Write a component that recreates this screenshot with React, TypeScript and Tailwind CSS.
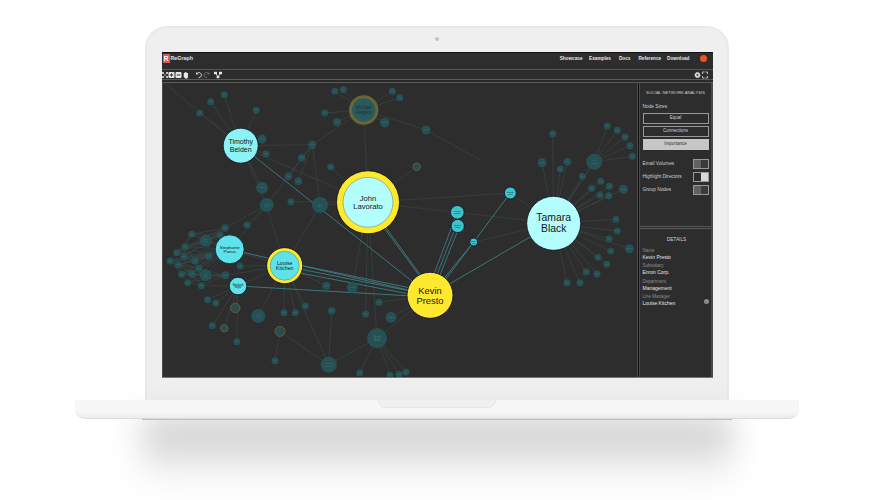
import { ReactNode } from 'react';

const hubs = {
  timothy: [240.7, 145.7],
  michael: [363.7, 110],
  john: [368, 202.3],
  stephanie: [229.7, 249.3],
  louise: [284.7, 265.7],
  elizabeth: [238, 286],
  kevin: [430, 295.3],
  tamara: [553.7, 223.3],
  tiny: [473.7, 242],
  greg: [510.3, 193],
  scott: [377, 338.3],
  amy: [594.3, 161.7],
  chris: [328.7, 364.7],
  bill: [320, 205],
  sam: [266.7, 205],
  mid: [312.3, 144.7],
  olive: [280, 331.3],
} as const;

type Hub = keyof typeof hubs;
type Dim = [number, number, number, Hub, (string | null)?];

// faded nodes in page coordinates: x, y, r, the hub they hang off, optional label
const dimNodes: Dim[] = [
  [224.3, 94.7, 3.5, 'timothy'], [210.7, 101.7, 3.5, 'timothy'], [199.7, 113, 3.5, 'timothy'],
  [256.3, 110.3, 3.5, 'timothy'], [262, 139, 4.5, 'timothy'], [266, 153.7, 3.5, 'timothy'],
  [312.3, 144.7, 4.2, 'michael'], [301.7, 157.7, 3.8, 'mid'], [288.3, 176.3, 3.8, 'mid'],
  [298.3, 181.3, 3.8, 'mid'], [330.7, 167, 3.5, 'john'], [262, 187.7, 6, 'timothy'],
  [324.7, 113, 3.5, 'michael'], [337, 122, 4, 'michael'], [334.7, 91.3, 3.5, 'michael'],
  [343.3, 89.7, 3.5, 'michael'], [392.3, 91.3, 3.5, 'michael'], [399.7, 97.7, 3.5, 'michael'],
  [384.7, 122.7, 4.8, 'michael'], [426, 130, 4.5, 'michael'],
  [552.7, 133.7, 3.5, 'tamara'], [542, 162.7, 4.5, 'tamara'], [567.3, 161.7, 3.8, 'tamara'],
  [560.3, 169, 3.5, 'tamara'], [594.3, 161.7, 8, 'tamara', 'Amy Wong'], [582.3, 176.3, 3.5, 'tamara'],
  [591.7, 188.3, 3.5, 'tamara'], [600.7, 181.3, 3.5, 'tamara'], [609.3, 186.3, 3.5, 'tamara'],
  [623.3, 189.3, 4.5, 'tamara'], [600, 195, 3.5, 'tamara'], [608.7, 195.7, 3.5, 'tamara'],
  [607.3, 126, 3.5, 'amy'], [617.3, 130.3, 3.5, 'amy'], [625, 137, 3.5, 'amy'],
  [630, 145.7, 3.5, 'amy'], [632.3, 156.3, 3.5, 'amy'],
  [616, 219.3, 3.5, 'tamara'], [617.3, 231, 3.5, 'tamara'], [609, 239, 3.5, 'tamara'],
  [610.7, 251, 3.5, 'tamara'], [629.3, 248.7, 4.5, 'tamara'], [598, 257.3, 3.5, 'tamara'],
  [606.7, 264.3, 3.5, 'tamara'], [597, 274, 3.5, 'tamara'], [586.3, 272, 3.5, 'tamara'],
  [580, 282.7, 3.5, 'tamara'], [567, 282.7, 3.5, 'tamara'],
  [266.7, 205, 7, 'timothy', 'Sam Ross'], [291, 201.7, 3.5, 'john'], [320, 205, 8, 'john', 'Bill Rapp'],
  [225, 228, 3.8, 'sam'], [247, 225, 3.5, 'sam'], [191.7, 234.3, 3.5, 'stephanie'],
  [205.7, 240.7, 6, 'stephanie', 'Dan Hyatt'], [220, 235, 3.5, 'stephanie'], [185, 246.7, 3.5, 'stephanie'],
  [176.7, 252.7, 3.5, 'stephanie'], [184, 256.7, 3.5, 'stephanie'], [195, 260.7, 3.8, 'stephanie'],
  [208.7, 256, 4, 'stephanie'], [170, 261, 3.5, 'stephanie'], [178.3, 264.7, 3.5, 'stephanie'],
  [199, 268.3, 3.5, 'stephanie'], [240, 266, 3.5, 'louise'], [181.7, 274.3, 3.5, 'stephanie'],
  [192, 274, 3.8, 'stephanie'], [205.7, 275.3, 6, 'stephanie', 'Ted Barr'], [225.3, 275.3, 4, 'louise'],
  [187.7, 282.7, 3.5, 'stephanie'], [201.3, 285.7, 3.5, 'elizabeth'], [207.7, 299.7, 3.5, 'elizabeth'],
  [215.7, 303, 3.5, 'elizabeth'], [258.3, 316, 7, 'louise', 'Lynn Hart'], [236.7, 341.7, 3.5, 'elizabeth'],
  [284, 312.7, 3.5, 'louise'], [295.3, 312.7, 3.5, 'louise'], [305.3, 306, 3.5, 'louise'],
  [326.3, 285.7, 4, 'louise'], [352.3, 287.3, 5.5, 'john'], [331.7, 310.7, 3.8, 'chris'],
  [365.7, 314, 3.5, 'john'], [379, 302.3, 3.5, 'kevin'], [391, 317.3, 5.5, 'kevin'],
  [377, 338.3, 10, 'john', 'Scott Neal'], [328.7, 364.7, 8, 'scott', 'Chris Dorland'],
  [359.7, 373, 3.5, 'scott'], [390, 375, 3.5, 'scott'], [399, 374.3, 3.5, 'scott'],
  [406, 372.3, 3.5, 'scott'], [275, 360.7, 3.5, 'olive'], [212.3, 325.7, 3.5, 'elizabeth'],
];

// olive ringed ones are directors that are faded out
const ringed: [number, number, number, Hub][] = [
  [416.7, 166.7, 4.2, 'john'],
  [235.3, 308, 5.2, 'elizabeth'],
  [224.3, 328.3, 4.2, 'elizabeth'],
  [280, 331.3, 5.5, 'chris'],
];

const extraEdges: [Hub, Hub][] = [
  ['timothy', 'john'], ['timothy', 'mid'], ['michael', 'john'], ['john', 'tamara'],
  ['john', 'greg'], ['sam', 'mid'], ['bill', 'mid'], ['sam', 'louise'], ['bill', 'louise'],
  ['tamara', 'greg'], ['tamara', 'amy'], ['tiny', 'tamara'], ['chris', 'louise'],
  ['scott', 'kevin'], ['sam', 'stephanie'], ['stephanie', 'louise'], ['elizabeth', 'louise'],
];

const strongEdges: [number, number, number, number][] = [
  [240.7, 145.7, 430, 295.3],
  [365, 202, 430, 290], [370, 206, 433, 292],
  [229.7, 249.3, 430, 295],
  [284.7, 262, 430, 292], [284.7, 266, 430, 295], [284.7, 270, 430, 298],
  [238, 286, 430, 297],
  [457.3, 212.3, 426, 295], [456, 226, 429, 295], [459.5, 226, 432, 295],
  [473.7, 242, 430, 295.3], [473, 243, 433, 296],
  [473.7, 242, 510.3, 193],
  [553.7, 223.3, 430, 295.3],
];

const clusterIdx = dimNodes
  .map((n, i) => (n[0] < 230 && n[1] > 225 && n[1] < 295 ? i : -1))
  .filter(i => i >= 0);

type BigNode = {
  x: number;
  y: number;
  r: number;
  fill: string;
  ring?: number;
  size: number;
  lines: string[];
};

const bigNodes: BigNode[] = [
  { x: 240.7, y: 145.7, r: 17.5, fill: '#8af3f6', size: 7, lines: ['Timothy', 'Belden'] },
  { x: 368, y: 202.3, r: 31.5, ring: 25, fill: '#b3fdfd', size: 7.6, lines: ['John', 'Lavorato'] },
  { x: 229.7, y: 249.3, r: 14.5, fill: '#5fe3ea', size: 4.4, lines: ['Stephanie', 'Panus'] },
  { x: 284.7, y: 265.7, r: 18, ring: 14.5, fill: '#5fe3ea', size: 5.3, lines: ['Louise', 'Kitchen'] },
  { x: 238, y: 286, r: 8.8, fill: '#5fe3ea', size: 2.6, lines: ['Elizabeth', 'Sager'] },
  { x: 553.7, y: 223.3, r: 27, fill: '#b3fdfd', size: 10.4, lines: ['Tamara', 'Black'] },
  { x: 430, y: 295.3, r: 23, fill: '#ffe92e', size: 9.4, lines: ['Kevin', 'Presto'] },
  { x: 457.3, y: 212.3, r: 6.8, fill: '#3cc3cb', size: 2.2, lines: ['Megan', 'Parker'] },
  { x: 457.7, y: 226, r: 6.6, fill: '#3cc3cb', size: 2.2, lines: ['Stacey', 'White'] },
  { x: 473.7, y: 242, r: 4, fill: '#3cc3cb', size: 1.8, lines: ['Sean', 'Cox'] },
  { x: 510.3, y: 193, r: 6, fill: '#3cc3cb', size: 2.2, lines: ['Gregg', 'Bell'] },
];

function Label({ x, y, size, lines, fill }: { x: number; y: number; size: number; lines: string[]; fill: string }) {
  const lh = size * 1.06;
  return (
    <text x={x} textAnchor="middle" fontSize={size} fill={fill} fontFamily="Liberation Sans, sans-serif">
      {lines.map((l, i) => (
        <tspan key={l} x={x} y={y + (i - (lines.length - 1) / 2) * lh + size * 0.35}>
          {l}
        </tspan>
      ))}
    </text>
  );
}

function Graph() {
  return (
    <svg viewBox="163 83 474 295" className="block w-[474px] h-[295px]">
      <g stroke="#3a4c4b" strokeWidth="0.55">
        {dimNodes.map((n, i) => (
          <line key={i} x1={n[0]} y1={n[1]} x2={hubs[n[3]][0]} y2={hubs[n[3]][1]} />
        ))}
        {ringed.map((n, i) => (
          <line key={i} x1={n[0]} y1={n[1]} x2={hubs[n[3]][0]} y2={hubs[n[3]][1]} />
        ))}
        {extraEdges.map(([a, b], i) => (
          <line key={i} x1={hubs[a][0]} y1={hubs[a][1]} x2={hubs[b][0]} y2={hubs[b][1]} />
        ))}
        <line x1="164" y1="83" x2="240" y2="145" />
        <line x1="426" y1="130" x2="480" y2="160" />
        {clusterIdx.map((a, i) =>
          clusterIdx.slice(i + 1, i + 5).map(b => (
            <line key={`${a}-${b}`} x1={dimNodes[a][0]} y1={dimNodes[a][1]} x2={dimNodes[b][0]} y2={dimNodes[b][1]} />
          )),
        )}
      </g>
      <g stroke="#3d7f83" strokeWidth="0.9">
        {strongEdges.map(([x1, y1, x2, y2], i) => (
          <line key={i} x1={x1} y1={y1} x2={x2} y2={y2} />
        ))}
      </g>
      {dimNodes.map((n, i) => (
        <g key={i}>
          <circle cx={n[0]} cy={n[1]} r={n[2]} fill="#255155" />
          {n[4] ? (
            <Label x={n[0]} y={n[1]} size={n[2] / 3.2} lines={n[4].split(' ')} fill="#4f7679" />
          ) : (
            <rect x={n[0] - n[2] * 0.5} y={n[1] - 0.4} width={n[2]} height="0.8" fill="#37666a" />
          )}
        </g>
      ))}
      {ringed.map((n, i) => (
        <circle key={i} cx={n[0]} cy={n[1]} r={n[2] - 0.5} fill="#2a4c50" stroke="#645f30" strokeWidth="1" />
      ))}
      <circle cx="363.7" cy="110" r="13.2" fill="#2b5a5e" stroke="#6a6532" strokeWidth="3" />
      <Label x={363.7} y={110} size={4.6} lines={['Michael', 'Gregory']} fill="#1d2f31" />
      {bigNodes.map(n => (
        <g key={n.lines[0]}>
          <circle
            cx={n.x}
            cy={n.y}
            r={n.r}
            fill={n.ring ? '#ffe92e' : n.fill}
            stroke="#0b0b22"
            strokeWidth="0.8"
          />
          {n.ring && <circle cx={n.x} cy={n.y} r={n.ring} fill={n.fill} stroke="#4e7f6a" strokeWidth="0.5" />}
          <Label x={n.x} y={n.y} size={n.size} lines={n.lines} fill="#12181c" />
        </g>
      ))}
    </svg>
  );
}

function Icon({ children, w = 8 }: { children: ReactNode; w?: number }) {
  return (
    <svg viewBox={`0 0 ${w} 8`} width={w} height={8} className="block shrink-0">
      {children}
    </svg>
  );
}

function Toolbar() {
  return (
    <div className="h-[9px] flex items-center text-white">
      <div className="flex items-center">
        <Icon w={6}>
          <path d="M0.500 1.500l2 2M0.500 6.500l2-2M5.500 1.500l-2 2M5.500 6.500l-2-2M0.500 1.500h1.500M0.500 1.500v1.500M5.500 1.500H4M5.500 1.500v1.500M0.500 6.500h1.500M0.500 6.500V5M5.500 6.500H4M5.500 6.500V5" stroke="#e8e8e8" strokeWidth="0.8" fill="none" />
        </Icon>
        <Icon w={7}>
          <rect x="0.500" y="1" width="6" height="6" rx="1" fill="#e8e8e8" />
          <path d="M3.500 2.300v3.400M1.800 4h3.400" stroke="#2d2d2d" strokeWidth="1" />
        </Icon>
        <Icon w={7}>
          <rect x="0.500" y="1" width="6" height="6" rx="1" fill="#e8e8e8" />
          <path d="M1.800 4h3.400" stroke="#2d2d2d" strokeWidth="1" />
        </Icon>
        <div className="ml-px">
          <Icon w={6}>
            <path d="M0.800 3.500V2h1V1h1v0.500h1V2h1.200v3.500L4.500 7.500H2L0.500 5z" fill="#e8e8e8" />
          </Icon>
        </div>
      </div>
      <div className="flex items-center ml-[6px]">
        <Icon>
          <path d="M2 2.500A2.500 2.500 0 1 1 3.500 6.500" stroke="#dcdcdc" strokeWidth="0.9" fill="none" />
          <path d="M1 1v2.500h2.500z" fill="#dcdcdc" />
        </Icon>
        <Icon>
          <path d="M5.500 2.500A2.500 2.500 0 1 0 4 6.500" stroke="#777" strokeWidth="0.8" fill="none" />
          <path d="M6.500 1v2.500H4z" fill="#777" />
        </Icon>
      </div>
      <div className="ml-[3px]">
        <Icon>
          <path d="M1.500 2L4 6M6.500 2L4 6" stroke="#dcdcdc" strokeWidth="0.9" fill="none" />
          <rect x="0" y="0.800" width="3" height="2.400" fill="#e8e8e8" />
          <rect x="5" y="0.800" width="3" height="2.400" fill="#e8e8e8" />
          <rect x="2.700" y="4.800" width="2.600" height="2.400" fill="#e8e8e8" />
        </Icon>
      </div>
      <div className="ml-auto flex items-center gap-px pr-[5px]">
        <Icon w={7}>
          <circle cx="3.500" cy="4" r="2.600" fill="#dcdcdc" stroke="#dcdcdc" strokeWidth="1" strokeDasharray="1 1" />
          <circle cx="3.500" cy="4" r="0.900" fill="#2d2d2d" />
        </Icon>
        <Icon w={6}>
          <path d="M0.500 3v-2h2M3.500 1h2v2M5.500 5v2h-2M2.500 7h-2V5" stroke="#dcdcdc" strokeWidth="0.8" fill="none" />
        </Icon>
      </div>
    </div>
  );
}

function SizeButton({ label, active }: { label: string; active?: boolean }) {
  return (
    <div
      className={
        active
          ? 'h-[11px] flex items-center justify-center bg-[#c6c6c6] text-[#333] text-[4.5px]'
          : 'h-[11px] flex items-center justify-center border-[1.5px] border-[#989898] text-[#d0d0d0] text-[4.5px]'
      }
    >
      {label}
    </div>
  );
}

function ToggleRow({ label, on }: { label: string; on?: boolean }) {
  return (
    <div className="h-[10px] flex items-center justify-between">
      <span className="text-[4.8px] text-[#cfcfcf]">{label}</span>
      <div className="w-[16px] h-[10px] border-[1.5px] border-[#989898] flex">
        <div className={on ? 'w-1/2 bg-[#2d2d2d]' : 'w-1/2 bg-[#626262]'} />
        <div className={on ? 'w-1/2 bg-[#d8d8d8]' : 'w-1/2 bg-[#3a3a3a]'} />
      </div>
    </div>
  );
}

function Detail({ label, value }: { label: string; value: string }) {
  return (
    <div className="h-[15.300px] leading-[6px]">
      <div className="text-[4.500px] text-[#8e8e8e]">{label}</div>
      <div className="text-[5px] text-[#e6e6e6]">{value}</div>
    </div>
  );
}

function Screen() {
  return (
    <div className="w-[551px] h-[326px] bg-[#4a4a4a] border-t border-[#111] flex flex-col font-['Liberation_Sans',sans-serif]">
      <div className="h-[16px] pb-[5px] bg-[#2d2d2d] flex items-center pl-[1px] pr-[5.500px] text-[4.700px] font-bold text-[#e6e6e6]">
        <div className="w-[7px] h-[9px] bg-[#e8564a] text-white flex items-center justify-center text-[6.500px]">R</div>
        <span className="ml-[1px] text-[5.300px]">ReGraph</span>
        <div className="ml-auto flex items-center">
          <span className="mr-[6.500px]">Showcase</span>
          <span className="mr-[8px]">Examples</span>
          <span className="mr-[8px]">Docs</span>
          <span className="mr-[6px]">Reference</span>
          <span className="mr-[10.500px]">Download</span>
          <div className="w-[7px] h-[7px] rounded-full bg-[#f2521f]" />
        </div>
      </div>
      <div className="h-px bg-[#555]" />
      <div className="bg-[#2d2d2d]">
        <Toolbar />
      </div>
      <div className="h-[4px] bg-[#2a2a2a] border-y border-[#5a5a5a]" />
      <div className="flex-1 flex min-h-0">
        <div className="w-[474px] ml-px bg-[#2d2d2d] overflow-hidden">
          <Graph />
        </div>
        <div className="w-px ml-px bg-[#111]" />
        <div className="flex-1 ml-px flex flex-col">
          <div className="h-[143px] bg-[#2d2d2d] pl-[3px] pr-[2px] text-[#d0d0d0]">
            <div className="text-center text-[4.200px] whitespace-nowrap mt-[7px] h-[9px]">SOCIAL NETWORK ANALYSIS</div>
            <div className="text-[4.800px] mt-[4px] h-[10px]">Node Sizes</div>
            <div className="flex flex-col gap-[2px]">
              <SizeButton label="Equal" />
              <SizeButton label="Connections" />
              <SizeButton label="Importance" active />
            </div>
            <div className="mt-[9px] flex flex-col gap-[3px]">
              <ToggleRow label="Email Volumes" />
              <ToggleRow label="Highlight Directors" on />
              <ToggleRow label="Group Nodes" />
            </div>
          </div>
          <div className="h-[3px] bg-[#2a2a2a] border-y border-[#5a5a5a]" />
          <div className="flex-1 bg-[#2d2d2d] pl-[3px] relative">
            <div className="text-center text-[4.800px] text-[#cfcfcf] mt-[7px] mb-[5px]">DETAILS</div>
            <Detail label="Name" value="Kevin Presto" />
            <Detail label="Subsidiary" value="Enron Corp." />
            <Detail label="Department" value="Management" />
            <Detail label="Line Manager" value="Louise Kitchen" />
            <div className="absolute left-[64px] top-[70px] w-[5px] h-[5px] rounded-full bg-[#8b8b8b]" />
          </div>
        </div>
        <div className="w-[2px] bg-[#4a4a4a]" />
      </div>
      <div className="h-px bg-[#777]" />
    </div>
  );
}

export default function App() {
  return (
    <div className="w-[874px] h-[500px] bg-white overflow-hidden flex flex-col items-center pt-[26px]">
      <div className="w-[584px] h-[374px] rounded-t-[22px] bg-[#efefef] border-t-2 border-x-2 border-[#e9e9e9] flex flex-col items-center pt-[24px] relative">
        <div className="absolute top-[9px] left-[288px] w-[4px] h-[4px] rounded-full bg-[#c4c4c4]" />
        <Screen />
      </div>
      <div className="w-[724px] h-[19px] rounded-b-[10px] bg-gradient-to-b from-[#f7f7f7] from-60% to-[#ececec] border-b border-[#dcdcdc] flex justify-center relative z-10">
        <div className="w-[118px] h-[8px] rounded-b-[8px] bg-[#f0f0f0] border-x border-b border-[#e6e6e6]" />
      </div>
      <div className="w-[590px] h-[1px] bg-[#bdbdbd] relative z-10" />
      <div className="w-[590px] h-[66px] bg-gradient-to-b from-[#c6c6c6] via-[#dfdfdf] to-white blur-lg -mt-[3px]" />
    </div>
  );
}
